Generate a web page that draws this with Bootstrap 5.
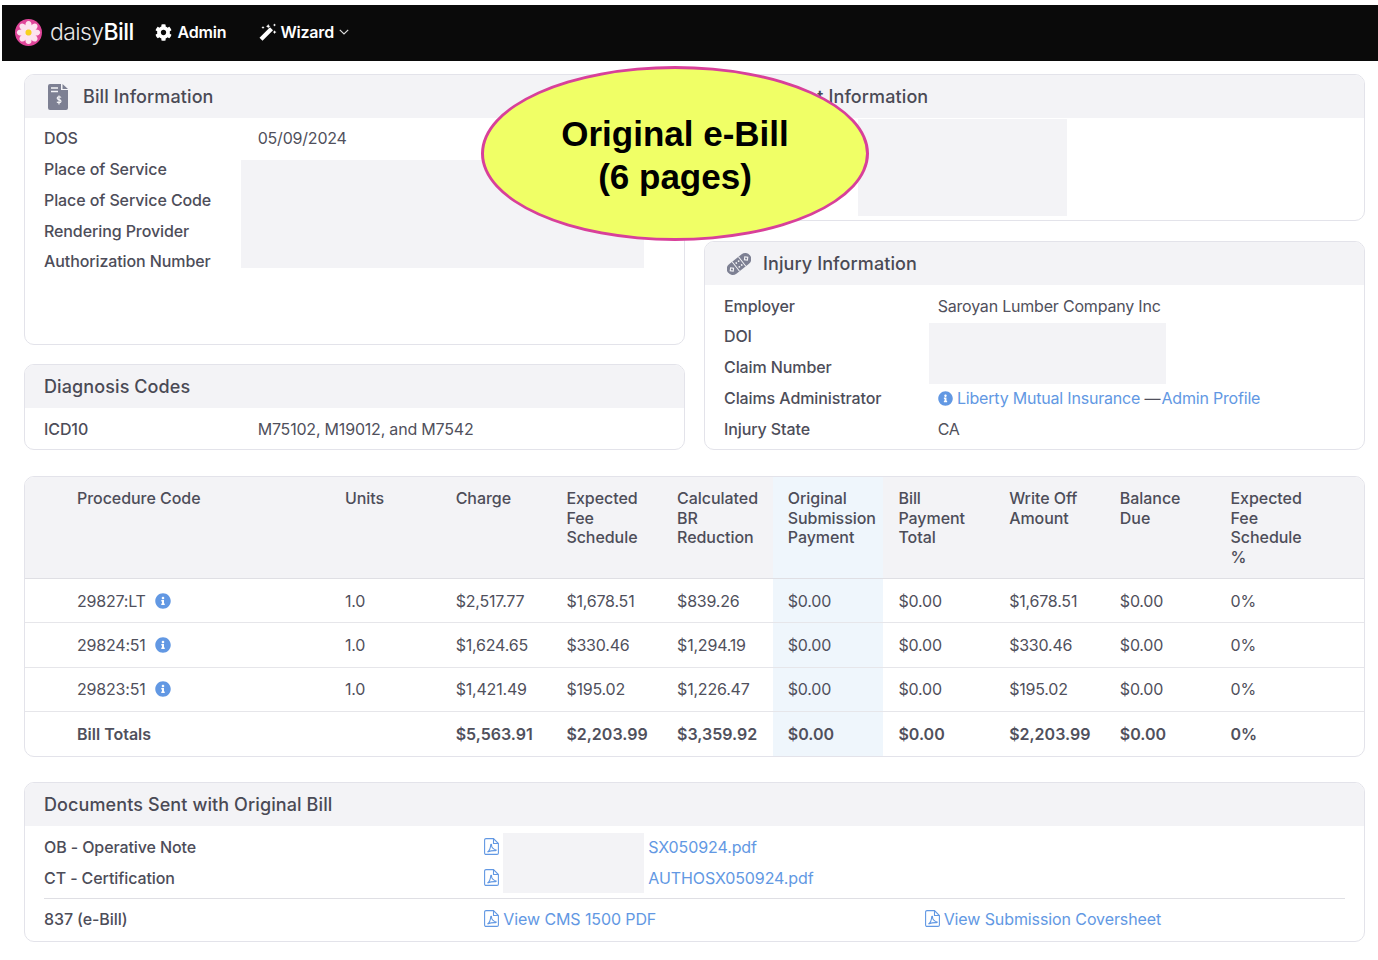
<!DOCTYPE html>
<html lang="en"><head><meta charset="utf-8"><title>daisyBill</title>
<link rel="stylesheet" href="https://cdn.jsdelivr.net/npm/bootstrap@5.3.0/dist/css/bootstrap.min.css">
<style>
body{font-family:Inter,"Liberation Sans",sans-serif;font-size:16px;letter-spacing:-.2px;color:#50505c;background:#fff;padding:5px 0 0 2px;}
a{color:#6298e3;text-decoration:none}
.topbar{background:#0a0a0a;height:56px;padding:0 13px 2px;gap:21px;color:#fff}
.brand{font-size:23px;font-weight:300;color:#e8e8e8;letter-spacing:-.6px;gap:8px}
.brand b{font-weight:500;color:#fff}
.topnav{font-weight:600;font-size:16px;gap:6px;color:#fff}
.topnav.wiz{margin-left:12px;gap:3px}
.chev{margin-left:2px}
.page{position:relative;padding:13px 13px 0 22px}
.cols{--bs-gutter-x:19px}
.ccard{border:1px solid #e3e3ea;border-radius:10px;background:#fff;overflow:hidden}
.chead{background:#f3f3f6;height:43px;font-size:18px;font-weight:500;letter-spacing:.1px;color:#4a4a55;padding:0 19px;gap:12px}
.chead svg{fill:#7d8093;width:24px;height:26px;margin-left:3px}
.cbody{padding:5px 19px 5px}
.dlrow{--bs-gutter-x:20px;line-height:24px;height:30.75px;align-items:center}
.lbl{font-weight:500;letter-spacing:-.1px;color:#4d4d59}
.mask{position:absolute;background:#f3f3f6}
.m-bill{left:216px;top:85px;width:403px;height:108px}
.m-pat{left:153px;top:44px;width:209px;height:97px}
.m-inj{left:224px;top:81px;width:237px;height:61px}
.m-doc{left:478px;top:50px;width:141px;height:60px}
.info{width:15px;height:15px;fill:#6298e3;vertical-align:-2px}
.info-t{width:16px;height:16px;margin-left:1px}
.dash{margin-right:-3px}
.grow1{flex:1 1 auto}
.gap19{gap:19px}
.gap20{gap:20px}
.tcard{margin-top:26px}
.dtable{table-layout:fixed;width:100%;border-collapse:collapse}
.dtable th{background:#f3f3f6;font-weight:500;letter-spacing:-.05px;line-height:19.5px;padding:12px 15px 11px;vertical-align:top;border-bottom:1px solid #dfdfe4;color:#4d4d59}
.dtable td{padding:9.7px 15px;line-height:24px;border-bottom:1px solid #e6e6ea;color:#50505c}
.dtable tr:last-child td{border-bottom:0;font-weight:600;letter-spacing:0}
.dtable .hl{background:#eff6fc}
.c0{width:37px}.c1{width:268px}.cn{width:110.7px}
.dcard{margin-top:25px;position:relative}
.dbody{padding:6px 19px 6px}
.dbody a{letter-spacing:-.1px}
.sep{border-top:1px solid #dfdfe4;margin:5px 0 0}
.lastrow{margin-top:5px}
.pdf{width:15px;height:17px;fill:none;stroke:#6298e3;stroke-width:1.1;vertical-align:-2px}
.namecell{padding-left:149px}
.pdfgap{margin-right:4px}
.bubble{position:absolute;left:479px;top:5px;width:388px;height:175px;border:3px solid #d8409a;border-radius:50%;background:#f0ff66;color:#000;font-family:"Liberation Sans",Arial,sans-serif;font-weight:700;font-size:35px;line-height:43px;letter-spacing:0;text-align:center;padding-top:43px}
</style></head><body>
<nav class="topbar d-flex align-items-center">
  <span class="brand d-flex align-items-center">
    <svg width="27" height="27" viewBox="0 0 27 27"><circle cx="13.5" cy="13.5" r="13.5" fill="#e0469a"/><g fill="#fde3ef"><ellipse cx="13.5" cy="6.5" rx="3.1" ry="4.6"/><ellipse cx="13.5" cy="6.5" rx="3.1" ry="4.6" transform="rotate(45 13.5 13.5)"/><ellipse cx="13.5" cy="6.5" rx="3.1" ry="4.6" transform="rotate(90 13.5 13.5)"/><ellipse cx="13.5" cy="6.5" rx="3.1" ry="4.6" transform="rotate(135 13.5 13.5)"/><ellipse cx="13.5" cy="6.5" rx="3.1" ry="4.6" transform="rotate(180 13.5 13.5)"/><ellipse cx="13.5" cy="6.5" rx="3.1" ry="4.6" transform="rotate(225 13.5 13.5)"/><ellipse cx="13.5" cy="6.5" rx="3.1" ry="4.6" transform="rotate(270 13.5 13.5)"/><ellipse cx="13.5" cy="6.5" rx="3.1" ry="4.6" transform="rotate(315 13.5 13.5)"/></g><circle cx="13.5" cy="13.5" r="3" fill="#f7d21e"/></svg>
    <span>daisy<b>Bill</b></span>
  </span>
  <span class="topnav d-flex align-items-center">
    <svg width="17" height="17" viewBox="0 0 512 512" fill="#fff"><path d="M487.4 315.7l-42.6-24.6c4.3-23.2 4.3-47 0-70.2l42.6-24.6c4.9-2.8 7.1-8.6 5.5-14-11.1-35.6-30-67.8-54.7-94.6-3.8-4.1-10-5.1-14.8-2.3L380.8 110c-17.9-15.4-38.5-27.3-60.8-35.1V25.8c0-5.6-3.9-10.5-9.4-11.7-36.7-8.2-74.3-7.8-109.2 0-5.5 1.2-9.4 6.1-9.4 11.7V75c-22.2 7.9-42.8 19.8-60.8 35.1L88.7 85.5c-4.9-2.8-11-1.9-14.8 2.3-24.7 26.7-43.6 58.9-54.7 94.6-1.7 5.4.6 11.2 5.5 14L67.3 221c-4.3 23.2-4.3 47 0 70.2l-42.6 24.6c-4.9 2.8-7.1 8.6-5.5 14 11.1 35.6 30 67.8 54.7 94.6 3.8 4.1 10 5.1 14.8 2.3l42.6-24.6c17.9 15.4 38.5 27.3 60.8 35.1v49.2c0 5.6 3.9 10.5 9.4 11.7 36.7 8.2 74.3 7.8 109.2 0 5.5-1.2 9.4-6.1 9.4-11.7v-49.2c22.2-7.9 42.8-19.8 60.8-35.1l42.6 24.6c4.9 2.8 11 1.9 14.8-2.3 24.7-26.7 43.6-58.9 54.7-94.6 1.5-5.5-.7-11.3-5.6-14.1zM256 336c-44.1 0-80-35.9-80-80s35.9-80 80-80 80 35.9 80 80-35.9 80-80 80z"/></svg>
    Admin
  </span>
  <span class="topnav wiz d-flex align-items-center">
    <svg width="18" height="18" viewBox="0 0 18 18" fill="#fff"><path d="M.5 14.800L11 4.300l3 3L3.500 17.800z"/><path d="M8.500 2.500l.7-1.500.7 1.500 1.500.7-1.500.7-.7 1.500-.7-1.500-1.500-.7zM15 8.500l.6-1.300.6 1.300 1.300.6-1.300.6-.6 1.300-.6-1.300-1.300-.6zM15 1.500l.5-1.100.5 1.100 1.100.5-1.100.5-.5 1.100-.5-1.100-1.100-.5zM3.500 4l.5-1.100.5 1.100 1.100.5-1.100.5-.5 1.100-.5-1.100-1.100-.5z"/></svg>
    Wizard
    <svg class="chev" width="10" height="6" viewBox="0 0 10 6" fill="none" stroke="#ddd" stroke-width="1.200"><path d="M.8.800L5 5l4.200-4.200"/></svg>
  </span>
</nav>
<div class="page">
  <div class="row cols">
    <div class="col-6 d-flex flex-column gap19">
      <section class="ccard position-relative grow1">
        <div class="chead d-flex align-items-center">
          <svg viewBox="0 0 24 26"><path d="M3 0h11v6h7v18a2 2 0 0 1-2 2H3a2 2 0 0 1-2-2V2a2 2 0 0 1 2-2zM15.500 0l5.500 5h-5.500z"/><path d="M4 4h7M4 7.500h7" stroke="#f3f3f6" stroke-width="1.500"/><path d="M14 13.500c-.5-1-3.800-1.200-3.800.7 0 1.900 3.800 1 3.800 3 0 2-3.500 1.800-4 .6M12 11.500v9" stroke="#f3f3f6" stroke-width="1.200" fill="none"/></svg>
          <span>Bill Information</span>
        </div>
        <div class="cbody">
          <div class="row dlrow"><div class="col-4 lbl">DOS</div><div class="col-8">05/09/2024</div></div>
          <div class="row dlrow"><div class="col-4 lbl">Place of Service</div></div>
          <div class="row dlrow"><div class="col-4 lbl">Place of Service Code</div></div>
          <div class="row dlrow"><div class="col-4 lbl">Rendering Provider</div></div>
          <div class="row dlrow"><div class="col-4 lbl">Authorization Number</div></div>
        </div>
        <div class="mask m-bill"></div>
      </section>
      <section class="ccard">
        <div class="chead d-flex align-items-center"><span>Diagnosis Codes</span></div>
        <div class="cbody">
          <div class="row dlrow"><div class="col-4 lbl">ICD10</div><div class="col-8">M75102, M19012, and M7542</div></div>
        </div>
      </section>
    </div>
    <div class="col-6 d-flex flex-column gap20">
      <section class="ccard position-relative">
        <div class="chead d-flex align-items-center">
          <svg viewBox="0 0 24 26"><circle cx="12" cy="8" r="6"/><path d="M1 25c0-7 5-10 11-10s11 3 11 10z"/></svg>
          <span>Patient Information</span>
        </div>
        <div class="cbody">
          <div class="row dlrow"></div><div class="row dlrow"></div><div class="row dlrow"></div>
        </div>
        <div class="mask m-pat"></div>
      </section>
      <section class="ccard position-relative">
        <div class="chead d-flex align-items-center">
          <svg viewBox="0 0 24 26"><g transform="rotate(-38 12 13)"><rect x="-2" y="7" width="28" height="12" rx="6"/><path d="M8 7v12M16 7v12" stroke="#f3f3f6" stroke-width="1"/><g fill="none" stroke="#f3f3f6" stroke-width="1.100"><rect x="1.500" y="11.500" width="3" height="3" transform="rotate(45 3 13)"/><rect x="19.500" y="11.500" width="3" height="3" transform="rotate(45 21 13)"/></g><g fill="#f3f3f6"><circle cx="10.500" cy="10.500" r=".9"/><circle cx="13.500" cy="10.500" r=".9"/><circle cx="10.500" cy="15.500" r=".9"/><circle cx="13.500" cy="15.500" r=".9"/></g></g></svg>
          <span>Injury Information</span>
        </div>
        <div class="cbody">
          <div class="row dlrow"><div class="col-4 lbl">Employer</div><div class="col-8">Saroyan Lumber Company Inc</div></div>
          <div class="row dlrow"><div class="col-4 lbl">DOI</div></div>
          <div class="row dlrow"><div class="col-4 lbl">Claim Number</div></div>
          <div class="row dlrow"><div class="col-4 lbl">Claims Administrator</div><div class="col-8"><svg class="info" viewBox="0 0 512 512"><path d="M256 8C119.043 8 8 119.083 8 256c0 136.997 111.043 248 248 248s248-111.003 248-248C504 119.083 392.957 8 256 8zm0 110c23.196 0 42 18.804 42 42s-18.804 42-42 42-42-18.804-42-42 18.804-42 42-42zm56 254c0 6.627-5.373 12-12 12h-88c-6.627 0-12-5.373-12-12v-24c0-6.627 5.373-12 12-12h12v-64h-12c-6.627 0-12-5.373-12-12v-24c0-6.627 5.373-12 12-12h64c6.627 0 12 5.373 12 12v100h12c6.627 0 12 5.373 12 12v24z"/></svg> <a href="#">Liberty Mutual Insurance</a> <span class="dash">—</span> <a href="#">Admin Profile</a></div></div>
          <div class="row dlrow"><div class="col-4 lbl">Injury State</div><div class="col-8">CA</div></div>
        </div>
        <div class="mask m-inj"></div>
      </section>
    </div>
  </div>

  <section class="ccard tcard">
    <table class="dtable">
      <colgroup><col class="c0"><col class="c1"><col class="cn"><col class="cn"><col class="cn"><col class="cn"><col class="cn"><col class="cn"><col class="cn"><col class="cn"><col class="cn"><col></colgroup>
      <thead><tr><th></th><th>Procedure Code</th><th>Units</th><th>Charge</th><th>Expected Fee Schedule</th><th>Calculated BR Reduction</th><th class="hl">Original Submission Payment</th><th>Bill Payment Total</th><th>Write Off Amount</th><th>Balance Due</th><th>Expected Fee Schedule %</th><th></th></tr></thead>
      <tbody>
        <tr><td></td><td>29827:LT &nbsp;<svg class="info info-t" viewBox="0 0 512 512"><path d="M256 8C119.043 8 8 119.083 8 256c0 136.997 111.043 248 248 248s248-111.003 248-248C504 119.083 392.957 8 256 8zm0 110c23.196 0 42 18.804 42 42s-18.804 42-42 42-42-18.804-42-42 18.804-42 42-42zm56 254c0 6.627-5.373 12-12 12h-88c-6.627 0-12-5.373-12-12v-24c0-6.627 5.373-12 12-12h12v-64h-12c-6.627 0-12-5.373-12-12v-24c0-6.627 5.373-12 12-12h64c6.627 0 12 5.373 12 12v100h12c6.627 0 12 5.373 12 12v24z"/></svg></td><td>1.0</td><td>$2,517.77</td><td>$1,678.51</td><td>$839.26</td><td class="hl">$0.00</td><td>$0.00</td><td>$1,678.51</td><td>$0.00</td><td>0%</td><td></td></tr>
        <tr><td></td><td>29824:51 &nbsp;<svg class="info info-t" viewBox="0 0 512 512"><path d="M256 8C119.043 8 8 119.083 8 256c0 136.997 111.043 248 248 248s248-111.003 248-248C504 119.083 392.957 8 256 8zm0 110c23.196 0 42 18.804 42 42s-18.804 42-42 42-42-18.804-42-42 18.804-42 42-42zm56 254c0 6.627-5.373 12-12 12h-88c-6.627 0-12-5.373-12-12v-24c0-6.627 5.373-12 12-12h12v-64h-12c-6.627 0-12-5.373-12-12v-24c0-6.627 5.373-12 12-12h64c6.627 0 12 5.373 12 12v100h12c6.627 0 12 5.373 12 12v24z"/></svg></td><td>1.0</td><td>$1,624.65</td><td>$330.46</td><td>$1,294.19</td><td class="hl">$0.00</td><td>$0.00</td><td>$330.46</td><td>$0.00</td><td>0%</td><td></td></tr>
        <tr><td></td><td>29823:51 &nbsp;<svg class="info info-t" viewBox="0 0 512 512"><path d="M256 8C119.043 8 8 119.083 8 256c0 136.997 111.043 248 248 248s248-111.003 248-248C504 119.083 392.957 8 256 8zm0 110c23.196 0 42 18.804 42 42s-18.804 42-42 42-42-18.804-42-42 18.804-42 42-42zm56 254c0 6.627-5.373 12-12 12h-88c-6.627 0-12-5.373-12-12v-24c0-6.627 5.373-12 12-12h12v-64h-12c-6.627 0-12-5.373-12-12v-24c0-6.627 5.373-12 12-12h64c6.627 0 12 5.373 12 12v100h12c6.627 0 12 5.373 12 12v24z"/></svg></td><td>1.0</td><td>$1,421.49</td><td>$195.02</td><td>$1,226.47</td><td class="hl">$0.00</td><td>$0.00</td><td>$195.02</td><td>$0.00</td><td>0%</td><td></td></tr>
        <tr><td></td><td>Bill Totals</td><td></td><td>$5,563.91</td><td>$2,203.99</td><td>$3,359.92</td><td class="hl">$0.00</td><td>$0.00</td><td>$2,203.99</td><td>$0.00</td><td>0%</td><td></td></tr>
      </tbody>
    </table>
  </section>

  <section class="ccard dcard">
    <div class="chead d-flex align-items-center"><span>Documents Sent with Original Bill</span></div>
    <div class="dbody">
      <div class="row dlrow"><div class="col-4 lbl">OB - Operative Note</div><div class="col-8"><svg class="pdf" viewBox="0 0 15 17"><path d="M2 .600h7.500l4.900 4.900V15a1.400 1.400 0 0 1-1.400 1.400H2A1.400 1.400 0 0 1 .6 15V2A1.400 1.400 0 0 1 2 .6zM9.500.600v4.900h4.900M3.500 14c1.500-1 3-4 3.200-7 .1-1 1-.8.900.4-.2 2 2 4 3.900 4.300 1 .1 1 1-.2 1-2.500-.2-5.600.5-7.800 1.300z"/></svg><span class="namecell"><a href="#">SX050924.pdf</a></span></div></div>
      <div class="row dlrow"><div class="col-4 lbl">CT - Certification</div><div class="col-8"><svg class="pdf" viewBox="0 0 15 17"><path d="M2 .600h7.500l4.900 4.900V15a1.400 1.400 0 0 1-1.400 1.400H2A1.400 1.400 0 0 1 .6 15V2A1.400 1.400 0 0 1 2 .6zM9.500.600v4.900h4.900M3.500 14c1.500-1 3-4 3.200-7 .1-1 1-.8.900.4-.2 2 2 4 3.900 4.300 1 .1 1 1-.2 1-2.500-.2-5.600.5-7.800 1.300z"/></svg><span class="namecell"><a href="#">AUTHOSX050924.pdf</a></span></div></div>
      <div class="sep"></div>
      <div class="row dlrow lastrow"><div class="col-4 lbl">837 (e-Bill)</div><div class="col-4"><a href="#"><svg class="pdf pdfgap" viewBox="0 0 15 17"><path d="M2 .600h7.500l4.900 4.900V15a1.400 1.400 0 0 1-1.400 1.400H2A1.400 1.400 0 0 1 .6 15V2A1.400 1.400 0 0 1 2 .6zM9.500.600v4.900h4.900M3.500 14c1.500-1 3-4 3.200-7 .1-1 1-.8.900.4-.2 2 2 4 3.900 4.300 1 .1 1 1-.2 1-2.500-.2-5.600.5-7.800 1.300z"/></svg>View CMS 1500 PDF</a></div><div class="col-4"><a href="#"><svg class="pdf pdfgap" viewBox="0 0 15 17"><path d="M2 .600h7.500l4.900 4.900V15a1.400 1.400 0 0 1-1.400 1.400H2A1.400 1.400 0 0 1 .6 15V2A1.400 1.400 0 0 1 2 .6zM9.500.600v4.900h4.900M3.500 14c1.500-1 3-4 3.200-7 .1-1 1-.8.900.4-.2 2 2 4 3.900 4.300 1 .1 1 1-.2 1-2.500-.2-5.600.5-7.800 1.300z"/></svg>View Submission Coversheet</a></div></div>
    </div>
    <div class="mask m-doc"></div>
  </section>
  <div class="bubble">Original e-Bill<br>(6 pages)</div>
</div>
</body></html>
